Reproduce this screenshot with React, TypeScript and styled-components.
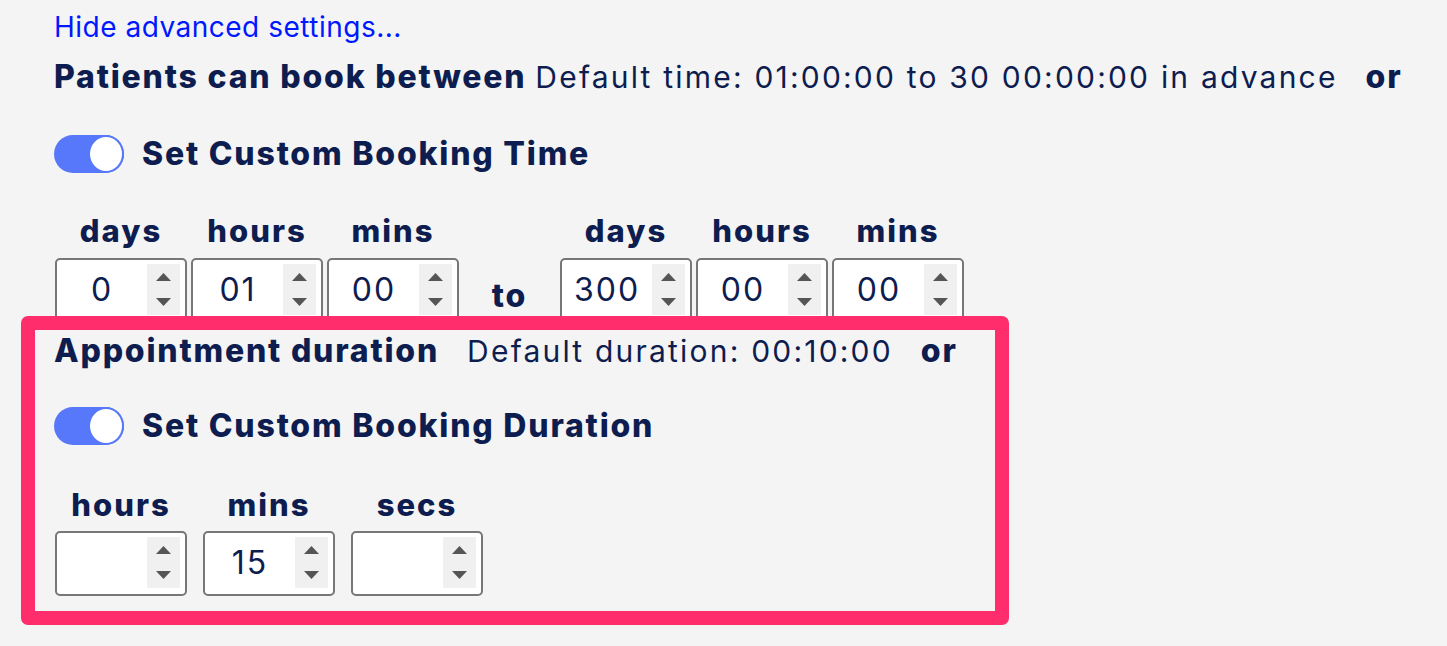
import React from "react";
import styled, { createGlobalStyle } from "styled-components";

const GlobalStyle = createGlobalStyle`
  html, body { margin: 0; padding: 0; background: #f4f4f4; }
  body { font-family: Inter, "Noto Sans", sans-serif; color: #0e1d4f; }
`;

const Page = styled.main`
  box-sizing: border-box;
  width: 1447px;
  height: 646px;
  overflow: hidden;
  padding: 9px 0 0 54px;
`;

const AdvancedLink = styled.a`
  display: block;
  font-size: 28px;
  letter-spacing: 0.5px;
  line-height: 36px;
  color: #0018ff;
  text-decoration: none;
  font-weight: 400;
`;

const SummaryRow = styled.div<{ $top: number; $gap: number }>`
  display: flex;
  align-items: baseline;
  gap: ${(p) => p.$gap}px;
  height: 40px;
  margin-top: ${(p) => p.$top}px;
  line-height: 40px;
  white-space: nowrap;
`;

const Strong = styled.span<{ $ml?: number }>`
  font-weight: 800;
  font-size: 32px;
  letter-spacing: 1.8px;
  margin-left: ${(p) => p.$ml ?? 0}px;
`;

const Plain = styled.span`
  font-weight: 400;
  font-size: 30px;
  letter-spacing: 2.2px;
`;

const ToggleRow = styled.div<{ $top: number }>`
  display: flex;
  align-items: center;
  gap: 18px;
  height: 38px;
  margin-top: ${(p) => p.$top}px;
`;

const Switch = styled.span`
  box-sizing: border-box;
  width: 70px;
  height: 38px;
  border-radius: 19px;
  background: #5778fa;
  display: flex;
  justify-content: flex-end;
`;

const Knob = styled.span`
  box-sizing: border-box;
  width: 36px;
  height: 38px;
  border-radius: 50%;
  background: #fff;
  border: 2px solid #5778fa;
`;

const ToggleLabel = styled.span`
  font-weight: 800;
  font-size: 32px;
  letter-spacing: 1.8px;
  line-height: 38px;
  white-space: nowrap;
`;

const Fields = styled.div<{ $top: number; $gap: number }>`
  display: flex;
  align-items: flex-end;
  gap: ${(p) => p.$gap}px;
  margin-top: ${(p) => p.$top}px;
  padding-left: 1px;
`;

const FieldCol = styled.div<{ $gap: number }>`
  display: flex;
  flex-direction: column;
  align-items: center;
  gap: ${(p) => p.$gap}px;
`;

const FieldLabel = styled.span`
  font-weight: 800;
  font-size: 31px;
  letter-spacing: 2px;
  line-height: 36px;
  height: 36px;
`;

const Field = styled.div`
  box-sizing: border-box;
  width: 132px;
  height: 65px;
  border: 2px solid #777;
  border-radius: 5px;
  background: #fff;
  display: flex;
  align-items: stretch;
  padding: 4px 5px 6px 0;
`;

const Value = styled.span`
  flex: 1;
  display: flex;
  align-items: center;
  justify-content: center;
  font-size: 32px;
  letter-spacing: 2px;
  font-weight: 400;
`;

const Spinner = styled.span`
  width: 33px;
  background: #f0f0f0;
  display: flex;
  flex-direction: column;
  justify-content: center;
  align-items: center;
  gap: 17px;
`;

const ToWord = styled.span`
  width: 93px;
  text-align: center;
  font-weight: 800;
  font-size: 32px;
  letter-spacing: 1.8px;
  line-height: 40px;
  margin-bottom: 7px;
`;

const Highlight = styled.section`
  position: relative;
  box-sizing: border-box;
  width: 988px;
  margin: -7px 0 0 -33px;
  border: 14px solid #ff2d6b;
  border-radius: 7px;
  background: #f4f4f4;
  padding: 1px 0 15px 19px;
`;

const Arrow = ({ up }: { up?: boolean }) => (
  <svg width="15" height="8" viewBox="0 0 15 8">
    <path d={up ? "M0 8 L7.5 0 L15 8 Z" : "M0 0 L15 0 L7.5 8 Z"} fill="#555" />
  </svg>
);

const NumberField = ({ label, value, gap }: { label: string; value: string; gap: number }) => (
  <FieldCol $gap={gap}>
    <FieldLabel>{label}</FieldLabel>
    <Field>
      <Value>{value}</Value>
      <Spinner>
        <Arrow up />
        <Arrow />
      </Spinner>
    </Field>
  </FieldCol>
);

export default function App() {
  return (
    <>
      <GlobalStyle />
      <Page>
        <AdvancedLink href="#">Hide advanced settings...</AdvancedLink>
        <SummaryRow $top={12} $gap={9}>
          <Strong>Patients can book between</Strong>
          <Plain>Default time: 01:00:00 to 30 00:00:00 in advance</Plain>
          <Strong $ml={19}>or</Strong>
        </SummaryRow>
        <ToggleRow $top={38}>
          <Switch>
            <Knob />
          </Switch>
          <ToggleLabel>Set Custom Booking Time</ToggleLabel>
        </ToggleRow>
        <Fields $top={40} $gap={4}>
          <NumberField label="days" value="0" gap={9} />
          <NumberField label="hours" value="01" gap={9} />
          <NumberField label="mins" value="00" gap={9} />
          <ToWord>to</ToWord>
          <NumberField label="days" value="300" gap={9} />
          <NumberField label="hours" value="00" gap={9} />
          <NumberField label="mins" value="00" gap={9} />
        </Fields>
        <Highlight>
          <SummaryRow $top={0} $gap={28}>
            <Strong>Appointment duration</Strong>
            <Plain>Default duration: 00:10:00</Plain>
            <Strong>or</Strong>
          </SummaryRow>
          <ToggleRow $top={36}>
            <Switch>
              <Knob />
            </Switch>
            <ToggleLabel>Set Custom Booking Duration</ToggleLabel>
          </ToggleRow>
          <Fields $top={42} $gap={16}>
            <NumberField label="hours" value="" gap={8} />
            <NumberField label="mins" value="15" gap={8} />
            <NumberField label="secs" value="" gap={8} />
          </Fields>
        </Highlight>
      </Page>
    </>
  );
}
